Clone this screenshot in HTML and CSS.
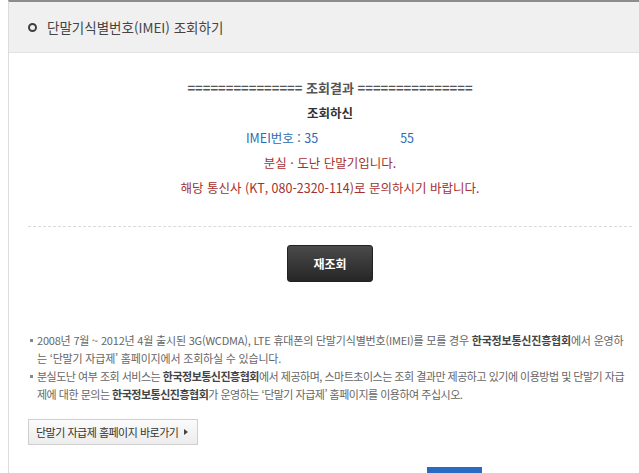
FILE: index.html
```html
<!DOCTYPE html>
<html lang="ko">
<head>
  <meta charset="UTF-8" />
  <title>단말기식별번호(IMEI) 조회하기</title>
  <link rel="stylesheet" href="styles.css">
</head>
<body>

<div class="panel">
  <!-- header -->
  <div class="panel-head">
    <span class="ring"></span>
    <span class="panel-title">단말기식별번호(IMEI) 조회하기</span>
  </div>

  <div class="panel-body">
    <!-- result lines -->
    <div class="result">
      <p class="res-title">=============== 조회결과 ===============</p>
      <p class="res-who">조회하신</p>
      <p class="res-imei">IMEI번호 : 35<span class="mask"></span>55</p>
      <p class="res-warn">분실 · 도난 단말기입니다.</p>
      <p class="res-warn">해당 통신사 (KT, 080-2320-114)로 문의하시기 바랍니다.</p>
    </div>

    <div class="divider"></div>

    <div class="btn-row">
      <button class="btn-dark">재조회</button>
    </div>

    <!-- notes -->
    <ul class="notes">
      <li>2008년 7월 ~ 2012년 4월 출시된 3G(WCDMA), LTE 휴대폰의 단말기식별번호(IMEI)를 모를 경우 <b>한국정보통신진흥협회</b>에서 운영하는 ‘단말기 자급제’ 홈페이지에서 조회하실 수 있습니다.</li>
      <li class="tight">분실도난 여부 조회 서비스는 <b>한국정보통신진흥협회</b>에서 제공하며, 스마트초이스는 조회 결과만 제공하고 있기에 이용방법 및 단말기 자급제에 대한 문의는 <b>한국정보통신진흥협회</b>가 운영하는 ‘단말기 자급제’ 홈페이지를 이용하여 주십시오.</li>
    </ul>

    <button class="btn-link">단말기 자급제 홈페이지 바로가기 <span class="arr"></span></button>

    <div class="bottom-row">
      <span class="btn-blue"></span>
    </div>
  </div>
</div>

</body>
</html>
```

FILE: styles.css
```css
html, body {
  overflow: hidden;
}
body {
  margin: 0;
  background-color: #ffffff;
  font-family: "Noto Sans CJK KR", "Noto Sans", sans-serif;
  color: #444;
}

/* outer box, wider than the window on purpose */
.panel {
  margin-left: 8px;
  width: 642px;
  border-top: 2px solid #8c8c8c;
  border-left: 1px solid #dcdcdc;
  min-height: 480px;
}

.panel-head {
  height: 50px;
  background-color: #f0f0f0;
  border-bottom: 1px solid #e2e2e2;
  display: flex;
  align-items: center;
  padding-left: 19px;
}
.ring {
  width: 5px;
  height: 5px;
  border: 2.5px solid #3f3f3f;
  border-radius: 50%;
  margin-right: 10px;
}
.panel-title {
  font-size: 13.5px;
  color: #444;
}

.panel-body {
  padding: 0 19px;
}

/* RESULT */
.result {
  padding-top: 22px;
  text-align: center;
  font-size: 12.5px;
  line-height: 25px;
}
.result p {
  margin: 0;
}
.res-title {
  font-size: 13px;
  font-weight: bold;
  color: #555;
}
.res-who {
  font-weight: bold;
  color: #333;
}
.res-imei {
  color: #2b6cb3;
}
.mask {
  display: inline-block;
  width: 82px;
}
.res-warn {
  color: #a5302f;
}

.divider {
  margin-top: 26px;
  border-top: 1px dashed #dadada;
}

.btn-row {
  display: flex;
  justify-content: center;
  padding: 18px 0 0;
}
.btn-dark {
  width: 86px;
  height: 37px;
  border: 1px solid #222;
  border-radius: 3px;
  background: linear-gradient(#4a4a4a, #262626);
  color: #fff;
  font-family: inherit;
  font-size: 12px;
  font-weight: bold;
  cursor: pointer;
}

/* NOTES */
.notes {
  list-style: none;
  margin: 49px 0 0;
  padding: 0 0 0 2px;
  font-size: 11px;
  line-height: 18px;
  color: #666;
  letter-spacing: -0.2px;
}
.notes li {
  position: relative;
  padding-left: 7px;
}
.notes li.tight {
  letter-spacing: -0.5px;
}
.notes li::before {
  content: "";
  position: absolute;
  left: 0;
  top: 8px;
  width: 3px;
  height: 3px;
  background-color: #888;
}
.notes b {
  color: #444;
}

.btn-link {
  margin-top: 16px;
  height: 26px;
  padding: 0 9px 0 7px;
  border: 1px solid #cfcfcf;
  background: linear-gradient(#fbfbfb, #ececec);
  font-family: inherit;
  font-size: 11px;
  letter-spacing: -0.5px;
  color: #333;
  cursor: pointer;
  display: flex;
  align-items: center;
}
.arr {
  display: inline-block;
  margin-left: 6px;
  border-left: 4px solid #444;
  border-top: 3px solid transparent;
  border-bottom: 3px solid transparent;
}

.bottom-row {
  display: flex;
  padding: 22px 0 0 399px;
}
.btn-blue {
  width: 55px;
  height: 30px;
  background-color: #2a6bc2;
}
```
